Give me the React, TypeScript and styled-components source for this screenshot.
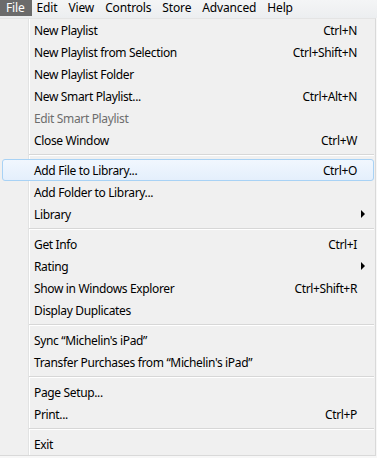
import React from "react";
import styled, { createGlobalStyle } from "styled-components";

const GlobalStyle = createGlobalStyle`
  html, body {
    margin: 0;
    padding: 0;
    background: #f7f7f7;
  }
  body {
    font-family: "Noto Sans", "Open Sans", sans-serif;
    font-size: 12px;
    letter-spacing: -0.35px;
    color: #000;
  }
`;

const Window = styled.div`
  width: 377px;
  height: 458px;
  overflow: hidden;
  display: flex;
  flex-direction: column;
`;

const MenuBar = styled.div`
  height: 18px;
  display: flex;
  align-items: flex-start;
  background: linear-gradient(#f4f5f6, #eceef0);
  letter-spacing: -0.15px;
`;

const BarItem = styled.div<{ $active?: boolean }>`
  height: 16px;
  line-height: 16px;
  padding: ${(p) => (p.$active ? "0 7px 0 6px" : "0 6px 0 5px")};
  background: ${(p) => (p.$active ? "#6b6b6b" : "transparent")};
  color: ${(p) => (p.$active ? "#fff" : "#000")};
`;

const Menu = styled.div`
  box-sizing: border-box;
  width: 376px;
  border-right: 1px solid #d9d9d9;
  border-bottom: 1px solid #d9d9d9;
  border-top: 1px solid #e4e4e4;
  background: linear-gradient(
    to right,
    #f0f0f0 0,
    #f0f0f0 28px,
    #e2e3e3 28px,
    #e2e3e3 29px,
    #ffffff 29px,
    #ffffff 30px,
    #f0f0f0 30px
  );
  padding-left: 2px;
  padding-right: 1px;
  display: flex;
  flex-direction: column;
`;

const Row = styled.div<{ $hover?: boolean; $disabled?: boolean }>`
  height: 22px;
  box-sizing: border-box;
  display: grid;
  grid-template-columns: 1fr auto 16px;
  align-items: center;
  padding-left: 31px;
  border: 1px solid ${(p) => (p.$hover ? "#a8d2f5" : "transparent")};
  border-radius: 3px;
  background: ${(p) =>
    p.$hover ? "linear-gradient(#f1f7fe, #e4effc)" : "transparent"};
  color: ${(p) => (p.$disabled ? "#6d6d6d" : "#000")};
  white-space: nowrap;
`;

const Label = styled.span``;

const Shortcut = styled.span`
  text-align: right;
`;

const Arrow = styled.span`
  justify-self: start;
  width: 0;
  height: 0;
  border-top: 4px solid transparent;
  border-bottom: 4px solid transparent;
  border-left: 4px solid #000;
  margin-left: 4px;
`;

const Separator = styled.div`
  height: 8px;
  display: flex;
  align-items: center;
  padding-left: 27px;
  &::after {
    content: "";
    flex: 1;
    height: 0;
    border-top: 1px solid #d7d7d7;
    border-bottom: 1px solid #fff;
  }
`;

type Item =
  | { sep: true }
  | {
      label: string;
      shortcut?: string;
      sub?: boolean;
      disabled?: boolean;
      hover?: boolean;
    };

const items: Item[] = [
  { label: "New Playlist", shortcut: "Ctrl+N" },
  { label: "New Playlist from Selection", shortcut: "Ctrl+Shift+N" },
  { label: "New Playlist Folder" },
  { label: "New Smart Playlist...", shortcut: "Ctrl+Alt+N" },
  { label: "Edit Smart Playlist", disabled: true },
  { label: "Close Window", shortcut: "Ctrl+W" },
  { sep: true },
  { label: "Add File to Library...", shortcut: "Ctrl+O", hover: true },
  { label: "Add Folder to Library..." },
  { label: "Library", sub: true },
  { sep: true },
  { label: "Get Info", shortcut: "Ctrl+I" },
  { label: "Rating", sub: true },
  { label: "Show in Windows Explorer", shortcut: "Ctrl+Shift+R" },
  { label: "Display Duplicates" },
  { sep: true },
  { label: "Sync \u201cMichelin's iPad\u201d" },
  { label: "Transfer Purchases from \u201cMichelin's iPad\u201d" },
  { sep: true },
  { label: "Page Setup..." },
  { label: "Print...", shortcut: "Ctrl+P" },
  { sep: true },
  { label: "Exit" },
];

const barItems = ["File", "Edit", "View", "Controls", "Store", "Advanced", "Help"];

export default function App() {
  return (
    <Window>
      <GlobalStyle />
      <MenuBar>
        {barItems.map((b, i) => (
          <BarItem key={b} $active={i === 0}>
            {b}
          </BarItem>
        ))}
      </MenuBar>
      <Menu>
        {items.map((it, i) =>
          "sep" in it ? (
            <Separator key={i} />
          ) : (
            <Row key={i} $hover={it.hover} $disabled={it.disabled}>
              <Label>{it.label}</Label>
              <Shortcut>{it.shortcut}</Shortcut>
              {it.sub ? <Arrow /> : <span />}
            </Row>
          )
        )}
      </Menu>
    </Window>
  );
}
